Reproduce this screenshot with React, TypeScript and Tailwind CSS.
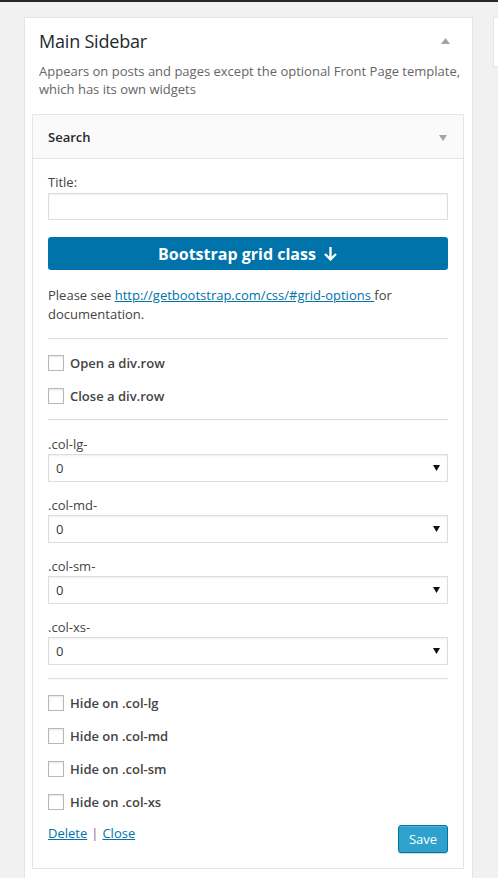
import React from "react";

function Checkbox({ label, className = "" }: { label: string; className?: string }) {
  return (
    <div className={`flex items-center h-[16px] gap-[6px] ${className}`}>
      <span className="w-[16px] h-[16px] shrink-0 bg-white border border-[#b4b9be] shadow-[inset_0_1px_2px_rgba(0,0,0,0.1)]" />
      <span className="font-semibold text-[#444] leading-[18px] whitespace-nowrap">{label}</span>
    </div>
  );
}

function SelectField({ label }: { label: string }) {
  return (
    <div className="mt-[14px]">
      <div className="leading-[18px] h-[18px] text-[#444]">{label}</div>
      <div className="mt-[1px] h-[28px] flex items-center justify-between pl-[7px] pr-[7px] bg-white border border-[#ddd] shadow-[inset_0_1px_2px_rgba(0,0,0,0.07)]">
        <span className="text-[#32373c] leading-[18px]">0</span>
        <svg width="7" height="6" viewBox="0 0 7 6" className="block">
          <path d="M0 0 H7 L3.5 6 Z" fill="#111" />
        </svg>
      </div>
    </div>
  );
}

function Hr({ className = "" }: { className?: string }) {
  return <div className={`h-[2px] border-t border-[#ddd] border-b border-b-[#fafafa] ${className}`} />;
}

export default function App() {
  return (
    <div className="w-[498px] h-[878px] overflow-hidden bg-[#f1f1f1] font-['Open_Sans',sans-serif] text-[13px] text-[#444]">
      <div className="h-[2px] bg-[#23282d]" />
      <div className="flex items-start pt-[15px] pl-[24px] gap-[20px]">
        <div className="w-[449px] shrink-0 bg-white border border-[#e5e5e5] pb-[40px]">
          <div className="mt-[11px] h-[24px] flex items-center justify-between pl-[14px] pr-[22px]">
            <h2 className="text-[18px] leading-[24px] font-normal text-[#23282d] tracking-[-0.2px]">Main Sidebar</h2>
            <svg width="9" height="6" viewBox="0 0 9 6" className="block">
              <path d="M0 6 L4.5 0 L9 6 Z" fill="#a0a5aa" />
            </svg>
          </div>
          <p className="mt-[9px] pl-[14px] pr-[2px] leading-[18px] text-[#666]">
            Appears on posts and pages except the optional Front Page template, which has its own widgets
          </p>

          <div className="mt-[16px] ml-[7px] w-[432px] bg-white border border-[#e5e5e5]">
            <div className="h-[44px] bg-[#fafafa] border-b border-[#e5e5e5] flex items-center justify-between pl-[15px] pr-[16px]">
              <h3 className="font-semibold text-[#23282d] leading-[18px]">Search</h3>
              <svg width="8" height="6" viewBox="0 0 8 6" className="block mt-[2px]">
                <path d="M0 0 H8 L4 6 Z" fill="#a0a5aa" />
              </svg>
            </div>

            <div className="px-[15px] pb-[15px]">
              <div className="mt-[14px] leading-[18px] h-[18px]">Title:</div>
              <div className="mt-[2px] h-[27px] bg-white border border-[#ddd] shadow-[inset_0_1px_2px_rgba(0,0,0,0.07)]" />

              <div className="mt-[17px] h-[33px] rounded-[3px] bg-[#0073aa] flex items-center justify-center gap-[7px] text-white">
                <span className="text-[16px] font-bold leading-[20px]">Bootstrap grid class</span>
                <svg width="15" height="15" viewBox="0 0 15 15" className="block">
                  <path d="M7.5 1 V13.2 M2 8 L7.5 13.5 L13 8" stroke="#fff" strokeWidth="2.3" fill="none" />
                </svg>
              </div>

              <p className="mt-[16px] leading-[19px]">
                Please see{" "}
                <a href="#" className="text-[#0073aa] underline">
                  http://getbootstrap.com/css/#grid-options{" "}
                </a>
                for documentation.
              </p>

              <Hr className="mt-[14px]" />
              <Checkbox label="Open a div.row" className="mt-[15px]" />
              <Checkbox label="Close a div.row" className="mt-[17px]" />
              <Hr className="mt-[15px]" />

              <SelectField label=".col-lg-" />
              <SelectField label=".col-md-" />
              <SelectField label=".col-sm-" />
              <SelectField label=".col-xs-" />

              <Hr className="mt-[13px]" />
              <Checkbox label="Hide on .col-lg" className="mt-[15px]" />
              <Checkbox label="Hide on .col-md" className="mt-[17px]" />
              <Checkbox label="Hide on .col-sm" className="mt-[17px]" />
              <Checkbox label="Hide on .col-xs" className="mt-[17px]" />

              <div className="mt-[15px] flex items-start justify-between">
                <div className="-mt-[1px] leading-[18px]">
                  <a href="#" className="text-[#0073aa] underline">Delete</a>
                  <span className="text-[#8a5a9f] mx-[4px]">|</span>
                  <a href="#" className="text-[#0073aa] underline">Close</a>
                </div>
                <button className="w-[50px] h-[28px] rounded-[3px] bg-[#2ea2cc] border border-[#0074a2] text-white text-[13px] leading-[26px] shadow-[inset_0_1px_0_rgba(120,200,230,0.5),0_1px_0_rgba(0,0,0,0.15)]">
                  Save
                </button>
              </div>
            </div>
          </div>
        </div>
        <div className="w-[200px] h-[50px] shrink-0 bg-white border border-[#e5e5e5]" />
      </div>
    </div>
  );
}
